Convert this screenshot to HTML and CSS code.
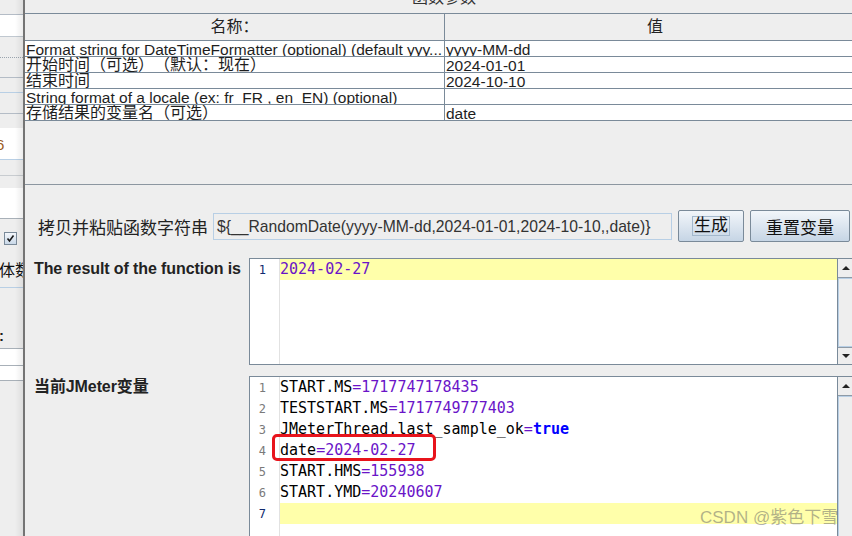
FILE: index.html
```html
<!DOCTYPE html>
<html lang="zh-CN">
<head>
<meta charset="utf-8">
<title>函数参数</title>
<link rel="stylesheet" href="styles.css">
</head>
<body>
<aside class="strip">
  <div class="s s-a"></div>
  <div class="s s-b"></div>
  <div class="s s-c"></div>
  <div class="s s-d"></div>
  <div class="s s-e"></div>
  <div class="s s-f"></div>
  <div class="s s-g"></div>
  <div class="s s-h"><span class="six">6</span></div>
  <div class="s s-i"></div>
  <div class="s s-j"></div>
  <div class="s s-k"></div>
  <div class="s s-l"><span class="chk"><svg width="11" height="11" viewBox="0 0 11 11"><path d="M2.5 5.5 L4.5 8 L8.5 2.5" fill="none" stroke="#1a1a1a" stroke-width="1.6"/></svg></span></div>
  <div class="s s-m"><span class="frag">体数</span></div>
  <div class="s s-o"><span class="colon">:</span></div>
  <div class="s s-p"></div>
  <div class="s s-q"></div>
  <div class="s s-r"></div>
</aside>
<div class="edge"></div>
<main class="main">
  <div class="title"><span>函数参数</span></div>
  <div class="ptable">
    <div class="prow head"><div class="pc c1">名称：</div><div class="pc c2">值</div></div>
    <div class="prow"><div class="pc c1">Format string for DateTimeFormatter (optional) (default yyy...</div><div class="pc c2">yyyy-MM-dd</div></div>
    <div class="prow"><div class="pc c1 cjk">开始时间（可选）（默认：现在）</div><div class="pc c2">2024-01-01</div></div>
    <div class="prow"><div class="pc c1 cjk">结束时间</div><div class="pc c2">2024-10-10</div></div>
    <div class="prow"><div class="pc c1">String format of a locale (ex: fr<span class="us">_</span>FR , en<span class="us">_</span>EN) (optional)</div><div class="pc c2"></div></div>
    <div class="prow"><div class="pc c1 cjk">存储结果的变量名（可选）</div><div class="pc c2">date</div></div>
  </div>
  <div class="spacer"></div>
  <section class="lower">
    <div class="copy-row">
      <span class="copy-label">拷贝并粘贴函数字符串</span>
      <div class="fn-input">${__RandomDate(yyyy-MM-dd,2024-01-01,2024-10-10,,date)}</div>
      <div class="btn btn-gen"><span class="focus">生成</span></div>
      <div class="btn btn-reset">重置变量</div>
    </div>
    <div class="field-row result-row">
      <div class="side-label">The result of the function is</div>
      <div class="editor ed-result">
        <div class="gutter"><div class="ln cur">1</div></div>
        <div class="code"><div class="line cur"><span class="v">2024-02-27</span></div></div>
        <div class="vscroll"><div class="arr up"><i></i></div><div class="track"><div class="thumb"></div></div><div class="arr down"><i></i></div></div>
      </div>
    </div>
    <div class="field-row vars-row">
      <div class="side-label">当前JMeter变量</div>
      <div class="editor ed-vars">
        <div class="gutter">
          <div class="ln">1</div><div class="ln">2</div><div class="ln">3</div><div class="ln">4</div><div class="ln">5</div><div class="ln">6</div><div class="ln cur">7</div>
        </div>
        <div class="code">
          <div class="line">START.MS<span class="v">=1717747178435</span></div>
          <div class="line">TESTSTART.MS<span class="v">=1717749777403</span></div>
          <div class="line">JMeterThread.last_sample_ok<span class="v">=</span><span class="kw">true</span></div>
          <div class="line">date<span class="v">=2024-02-27</span></div>
          <div class="line">START.HMS<span class="v">=155938</span></div>
          <div class="line">START.YMD<span class="v">=20240607</span></div>
          <div class="line cur"></div>
        </div>
        <div class="vscroll"><div class="arr up"><i></i></div><div class="track"><div class="thumb"></div></div></div>
        <div class="mark"></div>
      </div>
    </div>
  </section>
</main>
<div class="watermark">CSDN @紫色下雪</div>
</body>
</html>
```
FILE: styles.css
```css
* { box-sizing: border-box; }
html, body { margin: 0; padding: 0; }
body {
  width: 852px;
  height: 536px;
  overflow: hidden;
  background: #eeeeee;
  font-family: "Liberation Sans", "Noto Sans CJK SC", sans-serif;
  color: #1e1e1e;
  display: flex;
  position: relative;
  text-spacing-trim: space-all;
}

/* background window strip */
.strip {
  width: 23px;
  flex: none;
  display: flex;
  flex-direction: column;
  position: relative;
  overflow: hidden;
}
.strip::after {
  content: "";
  position: absolute;
  top: 0; right: 0; bottom: 0;
  width: 8px;
  background: linear-gradient(90deg, rgba(0,0,0,0), rgba(0,0,0,0.07));
}
.s { flex: none; background: #eeeeee; white-space: nowrap; overflow: hidden; }
.s-a { height: 15px; border-bottom: 1px solid #b4bcc6; }
.s-b { height: 22px; background: #fff; border-bottom: 1px solid #c0c8d0; }
.s-c { height: 21px; border-bottom: 1px dotted #9aa4ae; }
.s-d { height: 20px; border-bottom: 1px solid #b4bcc6; }
.s-e { height: 15px; border-bottom: 1px solid #b8cfe5; }
.s-f { height: 21px; border-bottom: 1px solid #b4bcc6; }
.s-g { height: 14px; }
.s-h { height: 32px; background: #fff; border-bottom: 1px solid #b8cfe5; font-size: 15px; line-height: 34px; }
.six { display: inline-block; margin-left: -4px; color: #9a5a1a; }
.s-i { height: 16px; border-bottom: 1px solid #c8ccd0; }
.s-j { height: 12px; }
.s-k { height: 31px; background: #fff; border-bottom: 1px solid #a8b0b8; }
.s-l { height: 43px; padding: 13px 0 0 4px; }
.chk {
  display: block;
  width: 13px; height: 13px;
  border: 1px solid #7a8a99;
  background: linear-gradient(#f4f7fb, #c9d8e8);
}
.chk svg { display: block; }
.s-m { height: 26px; border-bottom: 1px solid #b8cfe5; font-size: 16px; line-height: 18px; color: #111; }
.frag { display: inline-block; margin-left: -1px; }
.s-o { height: 61px; border-bottom: 1px solid #a8b0b8; display: flex; align-items: flex-end; padding-bottom: 4px; font-size: 15px; font-weight: bold; line-height: 16px; }
.colon { margin-left: -1px; }
.s-p { height: 17px; background: #fff; border-bottom: 1px solid #a8b0b8; }
.s-q { height: 15px; background: #fff; border-bottom: 1px solid #a8b0b8; }
.s-r { flex: 1; }

.edge { width: 2px; flex: none; background: #747474; }

.main {
  flex: 1;
  min-width: 0;
  display: flex;
  flex-direction: column;
  overflow: hidden;
}

.title {
  height: 13px;
  flex: none;
  padding-left: 387px;
  font-size: 16px;
  line-height: 16px;
  color: #333;
}
.title span { display: block; margin-top: -10px; white-space: nowrap; }

/* parameter table */
.ptable { flex: none; width: 845px; border-top: 1px solid #7a8a99; }
.prow { display: flex; height: 16px; border-bottom: 1px solid #7a8a99; background: #fff; }
.prow.head { height: 27px; background: #eeeeee; }
.pc {
  height: 15px;
  overflow: hidden;
  white-space: nowrap;
  font-size: 15.5px;
  line-height: 15px;
  padding: 1px 0 0 1px;
}
.us { color: transparent; }
.c1 { width: 420px; flex: none; border-right: 1px solid #7a8a99; }
.c2 { flex: 1; }
.cjk { font-size: 16px; padding-top: 0; }
.prow.head .pc {
  height: 26px;
  font-size: 16px;
  line-height: 26px;
  padding: 0;
  text-align: center;
  color: #222;
}
.prow.head .c2 { width: 420px; flex: none; }

.spacer { height: 63px; flex: none; }

.lower { flex: 1; border-top: 1px solid #8c96a0; padding-top: 25px; }

.copy-row { display: flex; align-items: center; height: 32px; padding-left: 13px; }
.copy-label { width: 175px; flex: none; font-size: 17px; color: #222; white-space: nowrap; }
.fn-input {
  width: 459px;
  height: 27px;
  flex: none;
  border: 1px solid #b8cfe5;
  background: #eeeeee;
  color: #333;
  font-size: 15.7px;
  line-height: 25px;
  padding-left: 3px;
  white-space: nowrap;
  overflow: hidden;
}
.btn {
  height: 32px;
  flex: none;
  margin-left: 6px;
  border: 1px solid #7a8a99;
  border-radius: 2px;
  background: linear-gradient(#f2f6fa, #c6d5e5);
  font-size: 17px;
  color: #111;
  display: flex;
  align-items: center;
  justify-content: center;
}
.btn-gen { width: 66px; }
.btn-reset { width: 100px; }
.focus { border: 1px solid #a3b8cc; padding: 0 1px; line-height: 18px; }

.field-row { display: flex; padding-left: 9px; }
.result-row { margin-top: 16px; }
.vars-row { margin-top: 11px; }
.side-label {
  width: 215px;
  flex: none;
  font-size: 16px;
  letter-spacing: -0.1px;
  font-weight: bold;
  line-height: 21px;
  color: #222;
  white-space: nowrap;
}

.editor {
  width: 606px;
  flex: none;
  border: 1px solid #7a8a99;
  background: #fff;
  display: flex;
  position: relative;
}
.ed-result { height: 107px; }
.ed-vars { height: 170px; }

.gutter {
  width: 30px;
  flex: none;
  border-right: 1px solid #e2e2e2;
  text-align: right;
  padding-right: 13px;
  font-family: "DejaVu Sans Mono", monospace;
  font-size: 12px;
  color: #7a7a7a;
}
.ln { height: 21px; line-height: 22px; }
.ln.cur { color: #102a6e; }

.code {
  flex: 1;
  font-family: "DejaVu Sans Mono", monospace;
  font-size: 15px;
  color: #000;
}
.line { height: 21px; line-height: 21px; white-space: pre; }
.line.cur { background: #ffffaa; }
.v { color: #6a14c8; }
.kw { color: #0000ff; font-weight: bold; }

.vscroll {
  width: 17px;
  flex: none;
  border-left: 1px solid #7a8a99;
  display: flex;
  flex-direction: column;
  background: #eeeeee;
}
.arr { flex: none; display: flex; align-items: center; justify-content: center; background: #eeeeee; }
.arr.up { height: 19px; border-bottom: 1px solid #8e9aa6; }
.arr.down { height: 17px; border-top: 1px solid #8e9aa6; }
.arr i { display: block; width: 0; height: 0; border-left: 4px solid transparent; border-right: 4px solid transparent; }
.arr.up i { border-bottom: 4px solid #222; }
.arr.down i { border-top: 4px solid #222; }
.track { flex: 1; display: flex; }
.thumb { flex: 1; border: 1px solid #b8cfe5; border-right: none; background: #eeeeee; }

.mark {
  position: absolute;
  left: 22px;
  top: 57px;
  width: 164px;
  height: 27px;
  border: 3px solid #e8141c;
  border-radius: 5px;
}

.watermark {
  position: absolute;
  left: 700px;
  top: 507px;
  font-size: 17px;
  line-height: 22px;
  color: rgba(100, 100, 100, 0.5);
  white-space: nowrap;
}
```
